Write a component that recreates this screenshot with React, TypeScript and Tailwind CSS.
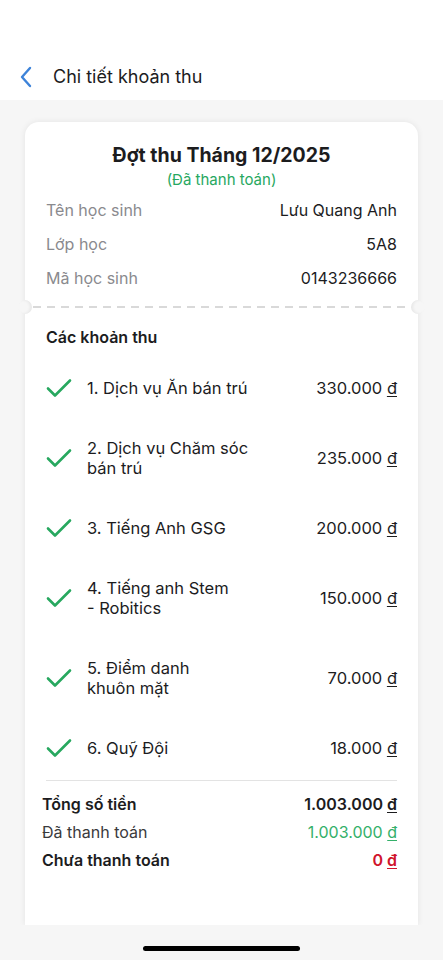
import React from 'react';

const info = [
  { label: 'Tên học sinh', value: 'Lưu Quang Anh' },
  { label: 'Lớp học', value: '5A8' },
  { label: 'Mã học sinh', value: '0143236666' },
];

const fees = [
  { lines: ['1. Dịch vụ Ăn bán trú'], amount: '330.000' },
  { lines: ['2. Dịch vụ Chăm sóc', 'bán trú'], amount: '235.000' },
  { lines: ['3. Tiếng Anh GSG'], amount: '200.000' },
  { lines: ['4. Tiếng anh Stem', '- Robitics'], amount: '150.000' },
  { lines: ['5. Điểm danh', 'khuôn mặt'], amount: '70.000' },
  { lines: ['6. Quỹ Đội'], amount: '18.000' },
];

const Check = () => (
  <svg width="26" height="20" viewBox="0 0 26 20" fill="none" className="shrink-0">
    <path d="M2 10.5 L9 17.5 L24 2.5" stroke="#27a85f" strokeWidth="2.6" strokeLinecap="round" strokeLinejoin="round" />
  </svg>
);

const Dong = () => <span className="underline underline-offset-2">đ</span>;

const App: React.FC = () => {
  return (
    <div className="w-[443px] h-[960px] flex flex-col overflow-hidden bg-[#f6f6f6] text-[#1c1c1e]" style={{ fontFamily: 'Inter, "Noto Sans", sans-serif' }}>
      {/* Header */}
      <div className="h-[100px] shrink-0 bg-white flex items-end pb-[10px] pl-[18px]">
        <div className="flex items-center h-[26px]">
          <svg width="16" height="24" viewBox="0 0 16 24" fill="none">
            <path d="M12 3 L4 12 L12 21" stroke="#3d83d9" strokeWidth="2.4" strokeLinecap="round" strokeLinejoin="round" />
          </svg>
          <span className="ml-[19px] text-[18px] leading-[26px]">Chi tiết khoản thu</span>
        </div>
      </div>

      {/* Content */}
      <div className="flex-1 overflow-hidden px-[25px] pt-[22px]">
        <div className="relative bg-white rounded-t-[14px] shadow-[0_0_6px_rgba(0,0,0,0.08)] h-full">
          {/* Top section */}
          <div className="pt-[19px] pb-[11px] px-[21px]">
            <div className="text-center text-[19.5px] leading-[28px] font-bold">Đợt thu Tháng 12/2025</div>
            <div className="text-center text-[15px] leading-[20px] mt-[1px] text-[#27a85f]">(Đã thanh toán)</div>
            <div className="mt-[3px]">
              {info.map((row) => (
                <div key={row.label} className="h-[34px] flex items-center justify-between text-[16px]">
                  <span className="text-[#8a8a8e]">{row.label}</span>
                  <span>{row.value}</span>
                </div>
              ))}
            </div>
          </div>

          {/* Ticket divider */}
          <div className="relative h-[2px]">
            <div className="mx-[8px] h-[1.5px] bg-[repeating-linear-gradient(90deg,#d9d9d9_0_8px,transparent_8px_14px)]" />
            <div className="absolute left-[-7px] top-[-6px] w-[14px] h-[14px] rounded-full bg-[#f6f6f6] shadow-[inset_-2px_0_3px_rgba(0,0,0,0.06)]" />
            <div className="absolute right-[-7px] top-[-6px] w-[14px] h-[14px] rounded-full bg-[#f6f6f6] shadow-[inset_2px_0_3px_rgba(0,0,0,0.06)]" />
          </div>

          {/* Fees */}
          <div className="pt-[17px] px-[21px]">
            <div className="text-[16px] leading-[24px] font-semibold">Các khoản thu</div>
            <div className="mt-[29px] flex flex-col gap-[40px]">
              {fees.map((fee) => (
                <div key={fee.lines[0]} className="flex items-center">
                  <Check />
                  <div className="ml-[15px] text-[16.5px] leading-[20px]">
                    {fee.lines.map((l) => (
                      <div key={l}>{l}</div>
                    ))}
                  </div>
                  <div className="ml-auto text-[16.5px] leading-[20px]">
                    {fee.amount} <Dong />
                  </div>
                </div>
              ))}
            </div>

            <div className="mt-[22px] border-t border-[#e3e3e3]" />

            <div className="mt-[9px] -ml-[4px] text-[16px]">
              <div className="h-[28px] flex items-center justify-between font-semibold">
                <span>Tổng số tiền</span>
                <span>1.003.000 <Dong /></span>
              </div>
              <div className="h-[28px] flex items-center justify-between">
                <span className="text-[#3a3a3c]">Đã thanh toán</span>
                <span className="text-[#34b06a]">1.003.000 <Dong /></span>
              </div>
              <div className="h-[28px] flex items-center justify-between font-semibold">
                <span>Chưa thanh toán</span>
                <span className="text-[#d0142c]">0 <Dong /></span>
              </div>
            </div>
          </div>
        </div>
      </div>

      {/* Home indicator */}
      <div className="h-[35px] shrink-0 flex justify-center pt-[21px]">
        <div className="w-[157px] h-[5px] rounded-full bg-black" />
      </div>
    </div>
  );
};

export default App;
